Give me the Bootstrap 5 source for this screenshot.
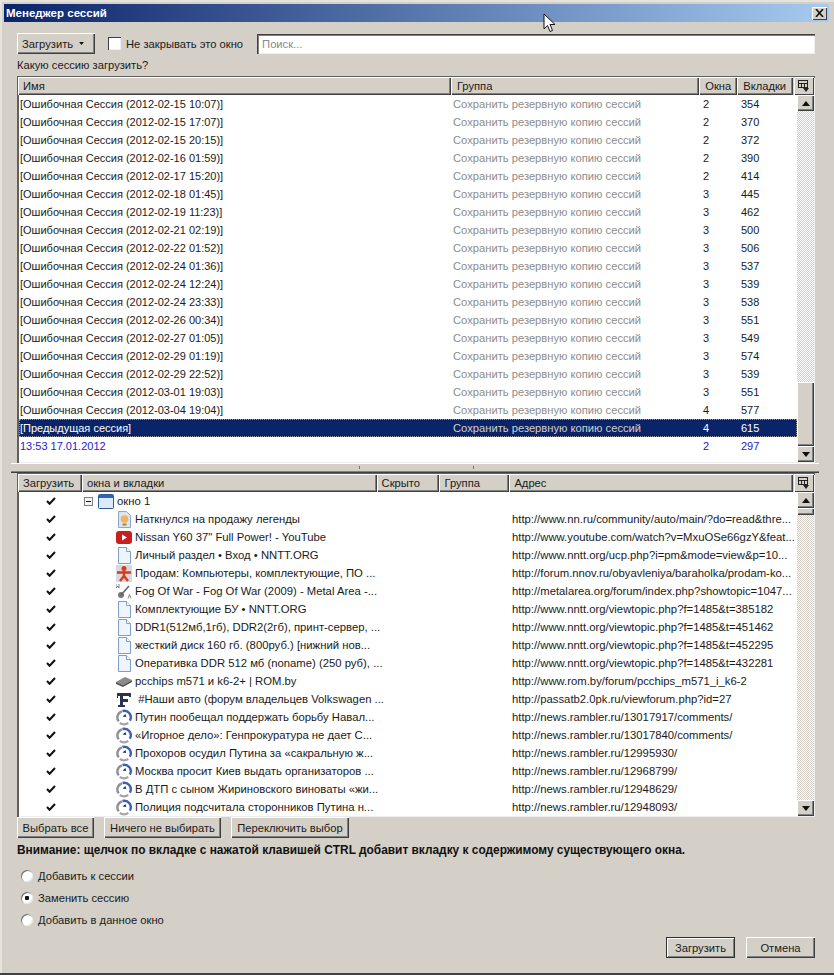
<!DOCTYPE html>
<html lang="ru"><head><meta charset="utf-8"><title>Менеджер сессий</title>
<link href="https://cdn.jsdelivr.net/npm/bootstrap@5.3.0/dist/css/bootstrap.min.css" rel="stylesheet">
<style>
html,body{margin:0;background:#d4d0c8}
body{font:11.2px/14px "Liberation Sans",Arial,sans-serif;color:#1a1a1a;overflow:hidden}
.defs{position:absolute;width:0;height:0}
.wnd{position:relative;width:834px;height:975px;background:#d4d0c8;box-shadow:inset 0 2px 0 #e6e3dd,inset 0 -2px 0 #404040,inset 2px 0 0 #e6e3dd}
.ttl{height:18px;margin:4px 5px 0 4px;padding:0 2px 0 2px;background:linear-gradient(90deg,#0a246a,#a6caf0);color:#fff;font-weight:700;font-size:11.5px}
.xbtn{width:15px;height:13px;background:#d4d0c8;box-shadow:inset 1px 1px 0 #fff,inset -1px -1px 0 #404040;display:flex;align-items:center;justify-content:center}
.body-pad{padding:11px 19px 0 17px}
.wb{height:21px;padding:0 4px;border-radius:0;border:0;background:#d4d0c8;color:#1a1a1a;font:inherit;box-shadow:inset 1px 1px 0 #fff,inset -1px -1px 0 #404040,inset -2px -2px 0 #808080;white-space:nowrap}
.wb:hover,.wb:active{background:#d4d0c8!important;color:#1a1a1a!important}
.wb-def{box-shadow:inset 0 0 0 1px #303030,inset 2px 2px 0 #fff,inset -2px -2px 0 #808080}
.w-load{width:78px;padding:0 11px 0 5px}.w-sel1{width:77px}.w-sel2{width:117px}.w-sel3{width:118px}.w-ok{width:69px}
.ck{appearance:none;width:13px;height:13px;margin:0 5px 0 13px;background:#fff;box-shadow:inset 1px 1px 0 #404040,inset -1px -1px 0 #eee;flex:none}
.lbl-k{margin-right:14px}
.srch{flex:1;height:20px;margin-top:1px;background:#fff;color:#8a8a8a;padding:3px 5px;box-shadow:inset 1px 1px 0 #404040,inset 2px 2px 0 #808080,inset -1px -1px 0 #eee}
.ask{height:16px;margin-top:3px;line-height:16px}
.pane{background:#fff;box-shadow:inset 2px 2px 0 #606060,inset -1px -1px 0 #eee;padding:1px;overflow:hidden}
.pane1{height:387px;margin-top:3px}
.pane2{height:344px}
.hdr{height:18px;background:#d4d0c8;line-height:19px}
.hc{height:18px;padding-left:5px;box-shadow:inset 1px 1px 0 #fff,inset -1px -1px 0 #404040,inset -2px -2px 0 #808080;overflow:hidden;white-space:nowrap}
.h1a{width:434px}.h1b{width:249px;padding-left:6px}.h1c{width:38px;padding-left:6px}.h1d{width:56px;padding-left:6px}
.h2a{width:64px}.h2b{width:295px}.h2c{width:63px}.h2d{width:70px}.h2e{width:284px}
.hcorner{width:20px;height:18px;margin-left:1px;padding:3px 0 0 4px;box-shadow:inset 1px 1px 0 #fff,inset -1px -1px 0 #404040}
.rows{flex:1;min-width:0;overflow:hidden}
.srow{height:18px;line-height:18px;white-space:nowrap;margin-left:1px}
.s1{width:434px;padding-left:1px;font-size:11px}.s2{width:248px;color:#8c8c8c;font-size:11.2px}.s3{width:38px;padding-left:2px;font-size:11px}.s4{width:58px;padding-left:2px;font-size:11px}
.sel{background:#0a246a;color:#fff;outline:1px dotted #999;outline-offset:-1px}
.sel .s2{color:#d4d0c8}
.blu{color:#2222cc}
.vbar{width:17px;flex:none;display:flex;flex-direction:column;background-image:conic-gradient(#d4d0c8 25%,#fff 0 50%,#d4d0c8 0 75%,#fff 0);background-size:2px 2px}
.sb{height:16px;flex:none;background:#d4d0c8;box-shadow:inset 1px 1px 0 #fff,inset -1px -1px 0 #404040,inset -2px -2px 0 #808080;display:flex;align-items:center;justify-content:center}
.sthumb{flex:none;background:#d4d0c8;box-shadow:inset 1px 1px 0 #fff,inset -1px -1px 0 #404040,inset -2px -2px 0 #808080}
.t1{height:64px}.t2{height:7px}
.split{height:10px;position:relative;margin-left:-6px;margin-right:-4px;background:linear-gradient(#fff 0 1px,#d4d0c8 1px 8px,#808080 8px 9px,#404040 9px)}
.tick{width:1px;height:3px;background:#777;position:absolute;top:3px}
.tk1{left:348px}.tk2{left:462px}
.trow{height:18px;line-height:18px;white-space:nowrap;font-size:11.3px}
.tcheck{width:64px;padding-left:28px;flex:none}
.tmid{width:430px;flex:none}
.ico{width:16px;height:17px;flex:none;margin:0 3px 0 34px}
.ico0{margin:0 3px 0 5px}
.minus{width:9px;height:9px;flex:none;margin-left:2px}
.wrn{font-weight:700;font-size:11.9px;margin-top:4px;height:16px;line-height:16px;color:#111}
.rbox{margin-top:7px;line-height:22px}
.rd{appearance:none;width:12px;height:12px;border-radius:50%;background:#fff;box-shadow:inset 1px 1px 0 #707070,inset -1px -1px 0 #e8e8e8;margin:0 5px 0 4px;flex:none}
.rd:checked{background:radial-gradient(circle,#111 0 2px,#fff 2.5px)}
.rl{height:22px}
.foot{margin-top:6px;gap:11px}
.gapb{gap:10px}
.ptr{position:absolute;left:543px;top:13px}
</style></head><body>
<svg class="defs">
<defs>
<symbol id="tick" viewBox="0 0 10 8"><path d="M1 4l2.600 2.800L9 1" fill="none" stroke="#111" stroke-width="2"/></symbol>
<symbol id="doc" viewBox="0 0 16 17"><path d="M2.500.5h8l4 4v12h-12z" fill="#eef5fd" stroke="#7f9dc9"/><path d="M10.500.5v4h4" fill="#fff" stroke="#7f9dc9"/></symbol>
<symbol id="ram" viewBox="0 0 16 17"><path d="M2.700 12.400A6.500 6.500 0 0 1 6 2.300" fill="none" stroke="#8f9096" stroke-width="2.400"/><path d="M3.800 13.800a6.500 6.500 0 0 0 8.400 0" fill="none" stroke="#a4a4a4" stroke-width="2.400"/><path d="M6.500 2a6.500 6.500 0 0 1 7.300 9.600" fill="none" stroke="#3f62b0" stroke-width="2.400"/><path d="M6.500 7.500l3-2.500.7 3z" fill="#1d2f66"/></symbol>
<symbol id="upa" viewBox="0 0 8 5"><path d="M4 0l4 5H0z" fill="#111"/></symbol>
<symbol id="dna" viewBox="0 0 8 5"><path d="M0 0h8L4 5z" fill="#111"/></symbol>
<symbol id="cols" viewBox="0 0 11 12"><g shape-rendering="crispEdges"><path d="M.5.500h9v7h-9zM.5 3.500h9M3.500 3.500v4M6.500 3.500v4" fill="none" stroke="#222"/></g><path d="M5 8h6l-3 4z" fill="#222"/></symbol>
</defs></svg>
<div class="wnd d-flex flex-column">
<div class="ttl d-flex align-items-center justify-content-between"><span>Менеджер сессий</span><span class="xbtn"><svg width="9" height="8" viewBox="0 0 9 8"><path d="M1 0l7 8M8 0L1 8" stroke="#111" stroke-width="1.600"/></svg></span></div>
<div class="body-pad flex-grow-1 d-flex flex-column">
<div class="d-flex align-items-center">
<button class="btn wb w-load d-flex align-items-center justify-content-between">Загрузить <svg width="5" height="3" viewBox="0 0 8 5"><use href="#dna"/></svg></button>
<input type="checkbox" class="ck" aria-label="Не закрывать это окно"><span class="lbl-k">Не закрывать это окно</span>
<div class="srch">Поиск...</div>
</div>
<div class="ask">Какую сессию загрузить?</div>
<div class="pane pane1 d-flex flex-column">
<div class="hdr d-flex"><div class="hc h1a">Имя</div><div class="hc h1b">Группа</div><div class="hc h1c">Окна</div><div class="hc h1d">Вкладки</div><div class="hcorner"><svg class="d-block" width="11" height="12"><use href="#cols"/></svg></div></div>
<div class="d-flex flex-grow-1 overflow-hidden">
<div class="rows">
<div class="srow d-flex"><span class="s1">[Ошибочная Сессия (2012-02-15 10:07)]</span><span class="s2">Сохранить резервную копию сессий</span><span class="s3">2</span><span class="s4">354</span></div>
<div class="srow d-flex"><span class="s1">[Ошибочная Сессия (2012-02-15 17:07)]</span><span class="s2">Сохранить резервную копию сессий</span><span class="s3">2</span><span class="s4">370</span></div>
<div class="srow d-flex"><span class="s1">[Ошибочная Сессия (2012-02-15 20:15)]</span><span class="s2">Сохранить резервную копию сессий</span><span class="s3">2</span><span class="s4">372</span></div>
<div class="srow d-flex"><span class="s1">[Ошибочная Сессия (2012-02-16 01:59)]</span><span class="s2">Сохранить резервную копию сессий</span><span class="s3">2</span><span class="s4">390</span></div>
<div class="srow d-flex"><span class="s1">[Ошибочная Сессия (2012-02-17 15:20)]</span><span class="s2">Сохранить резервную копию сессий</span><span class="s3">2</span><span class="s4">414</span></div>
<div class="srow d-flex"><span class="s1">[Ошибочная Сессия (2012-02-18 01:45)]</span><span class="s2">Сохранить резервную копию сессий</span><span class="s3">3</span><span class="s4">445</span></div>
<div class="srow d-flex"><span class="s1">[Ошибочная Сессия (2012-02-19 11:23)]</span><span class="s2">Сохранить резервную копию сессий</span><span class="s3">3</span><span class="s4">462</span></div>
<div class="srow d-flex"><span class="s1">[Ошибочная Сессия (2012-02-21 02:19)]</span><span class="s2">Сохранить резервную копию сессий</span><span class="s3">3</span><span class="s4">500</span></div>
<div class="srow d-flex"><span class="s1">[Ошибочная Сессия (2012-02-22 01:52)]</span><span class="s2">Сохранить резервную копию сессий</span><span class="s3">3</span><span class="s4">506</span></div>
<div class="srow d-flex"><span class="s1">[Ошибочная Сессия (2012-02-24 01:36)]</span><span class="s2">Сохранить резервную копию сессий</span><span class="s3">3</span><span class="s4">537</span></div>
<div class="srow d-flex"><span class="s1">[Ошибочная Сессия (2012-02-24 12:24)]</span><span class="s2">Сохранить резервную копию сессий</span><span class="s3">3</span><span class="s4">539</span></div>
<div class="srow d-flex"><span class="s1">[Ошибочная Сессия (2012-02-24 23:33)]</span><span class="s2">Сохранить резервную копию сессий</span><span class="s3">3</span><span class="s4">538</span></div>
<div class="srow d-flex"><span class="s1">[Ошибочная Сессия (2012-02-26 00:34)]</span><span class="s2">Сохранить резервную копию сессий</span><span class="s3">3</span><span class="s4">551</span></div>
<div class="srow d-flex"><span class="s1">[Ошибочная Сессия (2012-02-27 01:05)]</span><span class="s2">Сохранить резервную копию сессий</span><span class="s3">3</span><span class="s4">549</span></div>
<div class="srow d-flex"><span class="s1">[Ошибочная Сессия (2012-02-29 01:19)]</span><span class="s2">Сохранить резервную копию сессий</span><span class="s3">3</span><span class="s4">574</span></div>
<div class="srow d-flex"><span class="s1">[Ошибочная Сессия (2012-02-29 22:52)]</span><span class="s2">Сохранить резервную копию сессий</span><span class="s3">3</span><span class="s4">539</span></div>
<div class="srow d-flex"><span class="s1">[Ошибочная Сессия (2012-03-01 19:03)]</span><span class="s2">Сохранить резервную копию сессий</span><span class="s3">3</span><span class="s4">551</span></div>
<div class="srow d-flex"><span class="s1">[Ошибочная Сессия (2012-03-04 19:04)]</span><span class="s2">Сохранить резервную копию сессий</span><span class="s3">4</span><span class="s4">577</span></div>
<div class="srow d-flex sel"><span class="s1">[Предыдущая сессия]</span><span class="s2">Сохранить резервную копию сессий</span><span class="s3">4</span><span class="s4">615</span></div>
<div class="srow d-flex blu"><span class="s1">13:53 17.01.2012</span><span class="s2"></span><span class="s3">2</span><span class="s4">297</span></div>
</div>
<div class="vbar"><div class="sb"><svg width="8" height="5"><use href="#upa"/></svg></div><div class="flex-grow-1"></div><div class="sthumb t1"></div><div class="sb"><svg width="8" height="5"><use href="#dna"/></svg></div></div>
</div></div>
<div class="split"><span class="tick tk1"></span><span class="tick tk2"></span></div>
<div class="pane pane2 d-flex flex-column">
<div class="hdr d-flex"><div class="hc h2a">Загрузить</div><div class="hc h2b">окна и вкладки</div><div class="hc h2c">Скрыто</div><div class="hc h2d">Группа</div><div class="hc h2e">Адрес</div><div class="hcorner"><svg class="d-block" width="11" height="12"><use href="#cols"/></svg></div></div>
<div class="d-flex flex-grow-1 overflow-hidden">
<div class="rows">
<div class="trow d-flex align-items-center"><span class="tcheck"><svg class="d-block" width="10" height="8"><use href="#tick"/></svg></span><svg class="minus" viewBox="0 0 9 9"><rect x=".5" y=".5" width="8" height="8" fill="#f4f4f4" stroke="#808080"/><path d="M2 4.500h5" stroke="#111"/></svg><svg class="ico ico0" viewBox="0 0 16 17"><rect x=".5" y="1.500" width="15" height="14" rx="1" fill="#dcebfa" stroke="#2c5a9a"/><rect x="1" y="2" width="14" height="3" fill="#2f66b4"/></svg><span>окно 1</span></div>
<div class="trow d-flex align-items-center"><span class="tcheck"><svg class="d-block" width="10" height="8"><use href="#tick"/></svg></span><span class="d-flex tmid align-items-center"><svg class="ico" viewBox="0 0 16 17"><path d="M2.500.5h8l4 4v12h-12z" fill="#d8e6f4" stroke="#8fa8c8"/><circle cx="8.500" cy="8" r="3.800" fill="#f3b25e"/><path d="M6.500 13.500h4" stroke="#c67a20" stroke-width="2"/></svg><span>Наткнулся на продажу легенды</span></span><span>http://www.nn.ru/community/auto/main/?do=read&amp;thre...</span></div>
<div class="trow d-flex align-items-center"><span class="tcheck"><svg class="d-block" width="10" height="8"><use href="#tick"/></svg></span><span class="d-flex tmid align-items-center"><svg class="ico" viewBox="0 0 16 17"><rect y="2" width="16" height="13" rx="3" fill="#c8201c"/><path d="M6 5.500l5 3-5 3z" fill="#fff"/></svg><span>Nissan Y60 37" Full Power! - YouTube</span></span><span>http://www.youtube.com/watch?v=MxuOSe66gzY&amp;feat...</span></div>
<div class="trow d-flex align-items-center"><span class="tcheck"><svg class="d-block" width="10" height="8"><use href="#tick"/></svg></span><span class="d-flex tmid align-items-center"><svg class="ico"><use href="#doc"/></svg><span>Личный раздел • Вход • NNTT.ORG</span></span><span>http://www.nntt.org/ucp.php?i=pm&amp;mode=view&amp;p=10...</span></div>
<div class="trow d-flex align-items-center"><span class="tcheck"><svg class="d-block" width="10" height="8"><use href="#tick"/></svg></span><span class="d-flex tmid align-items-center"><svg class="ico" viewBox="0 0 16 17"><rect width="16" height="17" fill="#d8d8e0"/><circle cx="8" cy="3.500" r="2.500" fill="#d83a1a"/><path d="M8 6v6M1 7.500h14M8 11l-4 5M8 11l4 5" stroke="#d83a1a" stroke-width="2.400" fill="none"/></svg><span>Продам: Компьютеры, комплектующие, ПО ...</span></span><span>http://forum.nnov.ru/obyavleniya/baraholka/prodam-ko...</span></div>
<div class="trow d-flex align-items-center"><span class="tcheck"><svg class="d-block" width="10" height="8"><use href="#tick"/></svg></span><span class="d-flex tmid align-items-center"><svg class="ico" viewBox="0 0 16 17"><circle cx="5" cy="12" r="3" fill="#777"/><path d="M5 12L13 3" stroke="#666" stroke-width="1.600"/><path d="M0 1v4l1.500-2L3 5V1M12 15.500l1.500-4 1.500 4" fill="none" stroke="#666" stroke-width=".8"/></svg><span>Fog Of War - Fog Of War (2009) - Metal Area -...</span></span><span>http://metalarea.org/forum/index.php?showtopic=1047...</span></div>
<div class="trow d-flex align-items-center"><span class="tcheck"><svg class="d-block" width="10" height="8"><use href="#tick"/></svg></span><span class="d-flex tmid align-items-center"><svg class="ico"><use href="#doc"/></svg><span>Комплектующие БУ • NNTT.ORG</span></span><span>http://www.nntt.org/viewtopic.php?f=1485&amp;t=385182</span></div>
<div class="trow d-flex align-items-center"><span class="tcheck"><svg class="d-block" width="10" height="8"><use href="#tick"/></svg></span><span class="d-flex tmid align-items-center"><svg class="ico"><use href="#doc"/></svg><span>DDR1(512мб,1гб), DDR2(2гб), принт-сервер, ...</span></span><span>http://www.nntt.org/viewtopic.php?f=1485&amp;t=451462</span></div>
<div class="trow d-flex align-items-center"><span class="tcheck"><svg class="d-block" width="10" height="8"><use href="#tick"/></svg></span><span class="d-flex tmid align-items-center"><svg class="ico"><use href="#doc"/></svg><span>жесткий диск 160 гб. (800руб.) [нижний нов...</span></span><span>http://www.nntt.org/viewtopic.php?f=1485&amp;t=452295</span></div>
<div class="trow d-flex align-items-center"><span class="tcheck"><svg class="d-block" width="10" height="8"><use href="#tick"/></svg></span><span class="d-flex tmid align-items-center"><svg class="ico"><use href="#doc"/></svg><span>Оперативка DDR 512 мб (noname) (250 руб), ...</span></span><span>http://www.nntt.org/viewtopic.php?f=1485&amp;t=432281</span></div>
<div class="trow d-flex align-items-center"><span class="tcheck"><svg class="d-block" width="10" height="8"><use href="#tick"/></svg></span><span class="d-flex tmid align-items-center"><svg class="ico" viewBox="0 0 16 17"><path d="M0 9l9-5 7 3-9 5z" fill="#8a8a8a"/><path d="M0 9l7 3 9-5v2l-9 5-7-3z" fill="#555"/></svg><span>pcchips m571 и k6-2+ | ROM.by</span></span><span>http://www.rom.by/forum/pcchips_m571_i_k6-2</span></div>
<div class="trow d-flex align-items-center"><span class="tcheck"><svg class="d-block" width="10" height="8"><use href="#tick"/></svg></span><span class="d-flex tmid align-items-center"><svg class="ico" viewBox="0 0 16 17"><path d="M1 2h14v4h-2V5H7v3h5v3H7v3h2v2H2v-2h2V5H2v2H1z" fill="#2b3350"/></svg><span>&nbsp;#Наши авто (форум владельцев Volkswagen ...</span></span><span>http://passatb2.0pk.ru/viewforum.php?id=27</span></div>
<div class="trow d-flex align-items-center"><span class="tcheck"><svg class="d-block" width="10" height="8"><use href="#tick"/></svg></span><span class="d-flex tmid align-items-center"><svg class="ico"><use href="#ram"/></svg><span>Путин пообещал поддержать борьбу Навал...</span></span><span>http://news.rambler.ru/13017917/comments/</span></div>
<div class="trow d-flex align-items-center"><span class="tcheck"><svg class="d-block" width="10" height="8"><use href="#tick"/></svg></span><span class="d-flex tmid align-items-center"><svg class="ico"><use href="#ram"/></svg><span>«Игорное дело»: Генпрокуратура не дает С...</span></span><span>http://news.rambler.ru/13017840/comments/</span></div>
<div class="trow d-flex align-items-center"><span class="tcheck"><svg class="d-block" width="10" height="8"><use href="#tick"/></svg></span><span class="d-flex tmid align-items-center"><svg class="ico"><use href="#ram"/></svg><span>Прохоров осудил Путина за «сакральную ж...</span></span><span>http://news.rambler.ru/12995930/</span></div>
<div class="trow d-flex align-items-center"><span class="tcheck"><svg class="d-block" width="10" height="8"><use href="#tick"/></svg></span><span class="d-flex tmid align-items-center"><svg class="ico"><use href="#ram"/></svg><span>Москва просит Киев выдать организаторов ...</span></span><span>http://news.rambler.ru/12968799/</span></div>
<div class="trow d-flex align-items-center"><span class="tcheck"><svg class="d-block" width="10" height="8"><use href="#tick"/></svg></span><span class="d-flex tmid align-items-center"><svg class="ico"><use href="#ram"/></svg><span>В ДТП с сыном Жириновского виноваты «жи...</span></span><span>http://news.rambler.ru/12948629/</span></div>
<div class="trow d-flex align-items-center"><span class="tcheck"><svg class="d-block" width="10" height="8"><use href="#tick"/></svg></span><span class="d-flex tmid align-items-center"><svg class="ico"><use href="#ram"/></svg><span>Полиция подсчитала сторонников Путина н...</span></span><span>http://news.rambler.ru/12948093/</span></div>
</div>
<div class="vbar"><div class="sb"><svg width="8" height="5"><use href="#upa"/></svg></div><div class="sthumb t2"></div><div class="flex-grow-1"></div><div class="sb"><svg width="8" height="5"><use href="#dna"/></svg></div></div>
</div></div>
<div class="d-flex gapb btnrow">
<button class="btn wb w-sel1">Выбрать все</button><button class="btn wb w-sel2">Ничего не выбирать</button><button class="btn wb w-sel3">Переключить выбор</button>
</div>
<div class="wrn">Внимание: щелчок по вкладке с нажатой клавишей CTRL добавит вкладку к содержимому существующего окна.</div>
<div class="rbox">
<div class="rl d-flex align-items-center"><input type="radio" class="rd" name="m" aria-label="Добавить к сессии"><span>Добавить к сессии</span></div>
<div class="rl d-flex align-items-center"><input type="radio" class="rd" name="m" checked aria-label="Заменить сессию"><span>Заменить сессию</span></div>
<div class="rl d-flex align-items-center"><input type="radio" class="rd" name="m" aria-label="Добавить в данное окно"><span>Добавить в данное окно</span></div>
</div>
<div class="d-flex justify-content-end foot">
<button class="btn wb wb-def w-ok">Загрузить</button><button class="btn wb w-ok">Отмена</button>
</div>
</div>
<svg class="ptr" width="13" height="21" viewBox="0 0 13 21"><path d="M1 1v15l3.500-3.500 2.500 6 2.500-1-2.500-6h5z" fill="#fff" stroke="#111"/></svg>
</div>
<script src="https://cdn.jsdelivr.net/npm/bootstrap@5.3.0/dist/js/bootstrap.bundle.min.js"></script>
</body></html>
